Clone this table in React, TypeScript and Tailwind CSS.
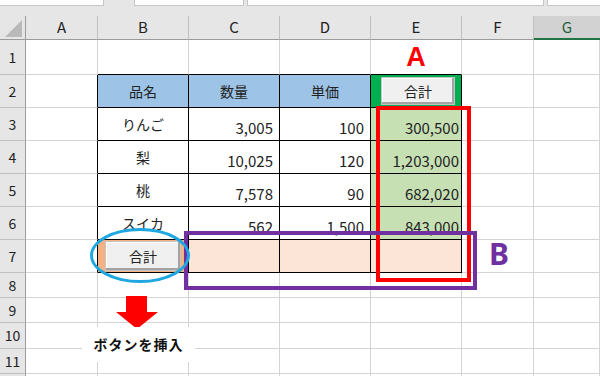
import React from 'react';

type CellData = {
  text?: string;
  kind?: 'name' | 'num' | 'numE' | 'button' | 'mark';
};

const COLS = ['A', 'B', 'C', 'D', 'E', 'F', 'G'];
const ROW_COUNT = 12;

// table body, rows 2..7, columns B..E
const TABLE: Record<number, CellData[]> = {
  2: [{ text: '品名', kind: 'name' }, { text: '数量', kind: 'name' }, { text: '単価', kind: 'name' }, { text: '合計', kind: 'button' }],
  3: [{ text: 'りんご', kind: 'name' }, { text: '3,005', kind: 'num' }, { text: '100', kind: 'num' }, { text: '300,500', kind: 'numE' }],
  4: [{ text: '梨', kind: 'name' }, { text: '10,025', kind: 'num' }, { text: '120', kind: 'num' }, { text: '1,203,000', kind: 'numE' }],
  5: [{ text: '桃', kind: 'name' }, { text: '7,578', kind: 'num' }, { text: '90', kind: 'num' }, { text: '682,020', kind: 'numE' }],
  6: [{ text: 'スイカ', kind: 'name' }, { text: '562', kind: 'num' }, { text: '1,500', kind: 'num' }, { text: '843,000', kind: 'numE' }],
  7: [{ text: '合計', kind: 'button' }, {}, {}, {}],
};

const fillFor = (r: number, c: number) => {
  if (r === 2 && c >= 2 && c <= 4) return 'bg-[#9dc3e6]';
  if (r === 2 && c === 5) return 'bg-[#00b050]';
  if (r >= 3 && r <= 6 && c === 5) return 'bg-[#c6e0b4]';
  if (r === 7 && c === 2) return 'bg-[#f4b183]';
  if (r === 7 && c >= 3 && c <= 5) return 'bg-[#fce4d6]';
  return 'bg-white';
};

const SheetButton = ({ label }: { label: string }) => (
  <div className="flex h-full w-full items-center justify-center border border-[#c4c4c4] bg-[#f0f0f0] text-[14px] text-[#222] shadow-[inset_-2px_-2px_0_#a3a3a3,inset_1px_1px_0_#ffffff]">
    {label}
  </div>
);

const CellContent = ({ data }: { data?: CellData }) => {
  if (!data || !data.text) return null;
  switch (data.kind) {
    case 'name':
      return <div className="flex h-full items-center justify-center text-[14px] text-[#222]">{data.text}</div>;
    case 'num':
      return <div className="flex h-full items-end justify-end pr-[6px] pb-[2px] text-[15px] leading-[20px] text-[#222]">{data.text}</div>;
    case 'numE':
      return <div className="flex h-full items-end justify-end pr-[2px] pb-[2px] text-[15px] leading-[20px] text-[#222]">{data.text}</div>;
    default:
      return null;
  }
};

const Cell = ({ r, c }: { r: number; c: number }) => {
  const inTable = r >= 2 && r <= 7 && c >= 2 && c <= 5;
  const rightBlack = inTable || (c === 1 && r >= 2 && r <= 7);
  const bottomBlack = inTable || (r === 1 && c >= 2 && c <= 5);
  const data = inTable ? TABLE[r][c - 2] : undefined;

  return (
    <div
      className={`border-r border-b ${rightBlack ? 'border-r-black' : 'border-r-[#d4d4d4]'} ${
        bottomBlack ? 'border-b-black' : 'border-b-[#d4d4d4]'
      } ${fillFor(r, c)}`}
    >
      {data?.kind === 'button' && r === 2 && (
        <div className="h-full pt-[2px] pr-[6px] pb-[2px] pl-[10px]">
          <SheetButton label={data.text!} />
        </div>
      )}
      {data?.kind === 'button' && r === 7 && (
        <div className="h-full pt-[1px] pr-[7px] pb-[1px] pl-[7px]">
          <SheetButton label={data.text!} />
        </div>
      )}
      {r === 1 && c === 5 && (
        <div className="flex h-full items-center justify-center font-['Liberation_Sans',sans-serif] text-[27px] font-bold text-[#ff0000]">
          A
        </div>
      )}
      <CellContent data={data} />
    </div>
  );
};

export default function App() {
  const rows = Array.from({ length: ROW_COUNT }, (_, i) => i + 1);

  return (
    <div className="relative h-[376px] w-[600px] overflow-hidden bg-[#e6e6e6] font-['Noto_Sans_CJK_JP','Noto_Sans',sans-serif]">
      {/* formula bar remnants */}
      <div className="flex h-[16px] items-start gap-[3px]">
        <div className="h-[6px] w-[104px] border-r border-b border-[#c6c6c6] bg-white" />
        <div className="ml-[27px] h-[6px] w-[110px] border-x border-b border-[#c6c6c6] bg-white" />
        <div className="h-[6px] w-[297px] border-x border-b border-[#c6c6c6] bg-white" />
        <div className="h-[6px] flex-1 border-l border-b border-[#c6c6c6] bg-white" />
      </div>

      {/* sheet grid */}
      <div className="grid grid-cols-[26px_72px_91px_91px_91px_91px_72px_1fr] grid-rows-[24px_35px_33px_33px_33px_33px_33px_33px_25px_25px_26px_25px_25px]">
        {/* corner */}
        <div className="flex items-end justify-end border-r border-b border-r-[#9b9b9b] border-b-[#9b9b9b] pr-[2px] pb-[1px]">
          <svg width="18" height="18" viewBox="0 0 18 18">
            <polygon points="17,0 17,17 0,17" fill="#b9b9b9" />
          </svg>
        </div>
        {COLS.map((col) =>
          col === 'G' ? (
            <div key={col} className="flex items-center justify-center border-b-2 border-b-[#217346] bg-[#d2d2d2] text-[15px] text-[#1f5f3c]">
              {col}
            </div>
          ) : (
            <div
              key={col}
              className="flex items-center justify-center border-r border-b border-r-[#c0c0c0] border-b-[#9b9b9b] text-[15px] text-[#222]"
            >
              {col}
            </div>
          )
        )}

        {rows.map((r) => (
          <React.Fragment key={r}>
            <div className="flex items-center justify-center border-r border-b border-r-[#9b9b9b] border-b-[#c0c0c0] text-[14px] text-[#222]">
              {r < ROW_COUNT ? r : null}
            </div>
            {COLS.map((_, ci) => (
              <Cell key={ci} r={r} c={ci + 1} />
            ))}
          </React.Fragment>
        ))}
      </div>

      {/* annotations */}
      <div className="absolute left-[376px] top-[106px] h-[176px] w-[95px] border-4 border-[#ff0000]" />
      <div className="absolute left-[184px] top-[231px] h-[59px] w-[293px] border-4 border-[#7030a0]" />
      <div className="absolute left-[489px] top-[234px] font-['Noto_Sans',sans-serif] text-[30px] leading-[40px] font-bold text-[#7030a0]">
        B
      </div>
      <div className="absolute left-[90px] top-[228px] h-[55px] w-[100px] rounded-[50%] border-[3px] border-[#1ea7e1]" />

      <svg className="absolute left-[116px] top-[296px]" width="42" height="34" viewBox="0 0 42 34">
        <polygon points="10,0 31,0 31,16 42,16 21,33 0,16 10,16" fill="#ff0000" />
      </svg>

      <div className="absolute left-[82px] top-[327px] flex h-[35px] w-[113px] items-center justify-center bg-white text-[14px] font-bold tracking-[1px] text-[#111]">
        ボタンを挿入
      </div>
    </div>
  );
}
